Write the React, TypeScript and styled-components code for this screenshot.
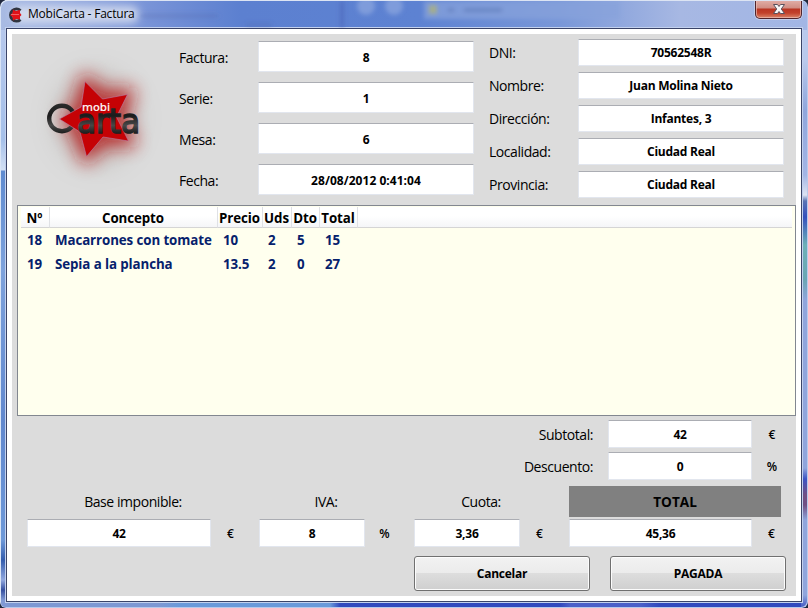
import React from 'react';
import styled, { createGlobalStyle } from 'styled-components';

const Global = createGlobalStyle`
  * { box-sizing: border-box; }
  body { margin: 0; overflow: hidden; background: #20283c; }
  button, table { font: inherit; }
`;

const Window = styled.main`
  width: 808px;
  height: 608px;
  padding: 0 6px 6px;
  border-radius: 7px 7px 6px 6px;
  box-shadow: inset 1px 1px 0 #d9e4f5, inset -1px -1px 0 #b9c9ea;
  font-family: 'Open Sans', 'Noto Sans', sans-serif;
  font-size: 14px;
  color: #000;
  background:
    linear-gradient(#b9c9ec 0 30px, #8fa6dc 80px, #a3b5e5 145px, #dde3f2 165px, #5a74b4 171px, #3450bd 187px, #6db0b8 215px, #6ba6b4 250px, #8fa5dc 270px, #8fa5dc 438px, #3d54c4 449px, #705084 465px, #705084 475px, #8fa5dc 490px, #8fa5dc 565px, #3149be 580px) right 30px / 7px 578px no-repeat,
    linear-gradient(#b6c8ec, #a5c0ea 110px, #d3e0f4 140px, #5f8bd0 141px, #7ea2dc 240px, #6188ce 390px, #6d98d8 510px, #335cad 530px, #91a8df 550px, #354f9f 560px, #8099d4 570px) left 30px / 7px 578px no-repeat,
    linear-gradient(90deg, #7d98d3 0 160px, #6a9ada 180px 330px, #3149be 340px 560px, #4b60c9 570px 640px, #3149be 660px) left bottom / 808px 7px no-repeat,
    linear-gradient(90deg, #a9bbe3, #9aaee0 60px, #7893d7 150px, #5c80d0 240px, #5d82d2 420px, #7997d8 560px, #a7b8e3 680px, #a2b6e5);
`;

const TitleBar = styled.header`
  position: relative;
  display: flex;
  align-items: flex-start;
  height: 28px;
  padding: 6px 0 0 1px;
  border-top: 1px solid #dce4f3;
  margin: 0 -1px;
  overflow: hidden;
`;

const Reflection = styled.svg`
  position: absolute;
  inset: 0;
`;

const WindowTitle = styled.h1`
  position: relative;
  margin: -1px 0 0 5px;
  font-size: 12px;
  line-height: 16px;
  font-weight: 400;
  letter-spacing: -0.2px;
  white-space: nowrap;
`;

const AppIcon = styled.svg`
  position: relative;
  margin-left: 1px;
`;

const CloseButton = styled.button`
  position: relative;
  width: 47px;
  height: 19px;
  margin: -7px 1px 0 auto;
  padding: 2px 0 0;
  display: flex;
  justify-content: center;
  border: 1px solid #50242c;
  border-top: 0;
  border-radius: 0 0 5px 5px;
  background: linear-gradient(#e2b0a9, #d08d83 8px, #b93523 9px, #c2412b 13px, #da8569);
  box-shadow: inset 0 0 0 1px #ecc0b8aa, 0 0 0 1px #d5dcef99;
`;

const Client = styled.div`
  height: 574px;
  padding: 5px;
  border: 1px solid #3a4468;
  background: #fff;
  box-shadow: 0 0 0 1px #c3d1ee;
`;

const Form = styled.div`
  display: flex;
  flex-direction: column;
  height: 562px;
  background: #dcdcdc;
`;

const Top = styled.section`
  display: flex;
  height: 171px;
`;

const LogoBox = styled.div`
  width: 167px;
`;

const FieldColumn = styled.div<{ $label: number; $pitch: number; $top: number; $left?: number }>`
  display: grid;
  grid-template-columns: ${p => p.$label}px auto;
  grid-auto-rows: ${p => p.$pitch}px;
  padding-top: ${p => p.$top}px;
  margin-left: ${p => p.$left ?? 0}px;
  align-content: start;
`;

const Label = styled.label<{ $h?: number }>`
  line-height: ${p => p.$h ?? 30}px;
  letter-spacing: -0.44px;
  white-space: nowrap;
`;

const Field = styled.output<{ $w: number; $h?: number; $spacing?: number }>`
  display: flex;
  align-items: center;
  justify-content: center;
  width: ${p => p.$w}px;
  height: ${p => p.$h ?? 28}px;
  border: 1px solid #e2e6ee;
  border-top-color: #abadb3;
  border-radius: 1px;
  background: #fff;
  font-size: 12px;
  font-weight: 700;
  letter-spacing: ${p => p.$spacing ?? -0.24}px;
  white-space: nowrap;
`;

const TallField = styled(Field)`
  padding-top: 2px;
`;

const ListView = styled.section`
  height: 211px;
  margin: 0 0 0 5px;
  padding: 1px 3px;
  border: 1px solid #828790;
  background: #ffffee;
`;

const Table = styled.table`
  width: 100%;
  table-layout: fixed;
  border-collapse: separate;
  border-spacing: 0;
  font-size: 13.33px;
  font-weight: 700;
`;

const HeadCell = styled.th<{ $w?: number }>`
  width: ${p => (p.$w ? `${p.$w}px` : 'auto')};
  height: 21px;
  padding: 1px 1px 0 0;
  border-right: ${p => (p.$w ? '1px solid #dfe1e5' : '0')};
  border-bottom: 1px solid #d5d5d5;
  background: linear-gradient(#fff 45%, #f5f6f8);
  line-height: 18px;
  letter-spacing: -0.1px;
  white-space: nowrap;
`;

const Cell = styled.td`
  height: 24px;
  padding: 0 0 1px 5px;
  line-height: 20px;
  letter-spacing: -0.1px;
  color: #06216c;
  white-space: nowrap;

  &:first-child {
    padding-left: 6px;
  }
`;

const Summary = styled.section`
  padding-top: 4px;
`;

const SummaryRow = styled.div`
  display: grid;
  grid-template-columns: 581px 15px 144px 40px;
  height: 32px;
`;

const RightLabel = styled(Label)`
  text-align: right;
`;

const Unit = styled.span`
  display: flex;
  align-items: center;
  justify-content: center;
  height: 28px;
  font-size: 12px;
  font-weight: 600;
`;

const Totals = styled.section`
  display: grid;
  grid-template-columns: 184px 39px 9px 106px 39px 10px 106px 39px 10px 183px 39px;
  grid-template-rows: 33px 28px;
  margin: 2px 0 0 15px;
`;

const CenterLabel = styled(Label)<{ $col: number; $shift?: number }>`
  grid-column: ${p => p.$col};
  grid-row: 1;
  text-align: center;
  padding-left: ${p => p.$shift ?? 0}px;
`;

const TotalBanner = styled.strong`
  grid-column: 10 / 12;
  grid-row: 1;
  width: 212px;
  height: 31px;
  background: #808080;
  text-align: center;
  line-height: 32px;
  font-size: 13.6px;
`;

const Amount = styled(Field)<{ $col: number }>`
  grid-column: ${p => p.$col};
  grid-row: 2;
`;

const AmountUnit = styled(Unit)<{ $col: number }>`
  grid-column: ${p => p.$col};
  grid-row: 2;
`;

const Actions = styled.footer`
  display: flex;
  gap: 20px;
  margin: 9px 0 0 402px;
`;

const ActionButton = styled.button`
  width: 176px;
  height: 35px;
  padding: 0 0 1px;
  border: 1px solid #707070;
  border-radius: 3px;
  background: linear-gradient(#f2f2f2, #ebebeb 49%, #dddddd 50%, #cfcfcf);
  box-shadow: inset 0 0 0 1px #fcfcfc;
  font-size: 12px;
  font-weight: 700;
  letter-spacing: -0.25px;
`;

const invoiceFields: { label: string; value: string; spacing?: number }[] = [
  { label: 'Factura:', value: '8' },
  { label: 'Serie:', value: '1' },
  { label: 'Mesa:', value: '6' },
  { label: 'Fecha:', value: '28/08/2012 0:41:04', spacing: 0.04 },
];

const customerFields = [
  ['DNI:', '70562548R'],
  ['Nombre:', 'Juan Molina Nieto'],
  ['Dirección:', 'Infantes, 3'],
  ['Localidad:', 'Ciudad Real'],
  ['Provincia:', 'Ciudad Real'],
];

const columns: [string, number?][] = [
  ['Nº', 29], ['Concepto', 168], ['Precio', 45], ['Uds', 29], ['Dto', 28], ['Total', 38], ['', undefined],
];

const lines = [
  ['18', 'Macarrones con tomate', '10', '2', '5', '15', ''],
  ['19', 'Sepia a la plancha', '13.5', '2', '0', '27', ''],
];

const amounts = [
  { label: 'Base imponible:', value: '42', unit: '€', w: 184, col: 1, shift: 28 },
  { label: 'IVA:', value: '8', unit: '%', w: 106, col: 4, shift: 28 },
  { label: 'Cuota:', value: '3,36', unit: '€', w: 106, col: 7, shift: 28 },
];

const Logo = () => (
  <svg width="167" height="171" viewBox="12 34 167 171">
    <defs>
      <filter id="glow" x="-80%" y="-80%" width="260%" height="260%"><feGaussianBlur stdDeviation="9" /></filter>
      <filter id="shade" x="-80%" y="-80%" width="260%" height="260%"><feGaussianBlur stdDeviation="14" /></filter>
      <linearGradient id="ink" gradientUnits="userSpaceOnUse" x1="0" y1="103" x2="0" y2="135">
        <stop offset="0" stopColor="#2c2c2c" />
        <stop offset="0.4" stopColor="#1c1c1c" />
        <stop offset="0.7" stopColor="#484848" />
        <stop offset="1" stopColor="#151515" />
      </linearGradient>
    </defs>
    <ellipse cx="96" cy="119" rx="38" ry="44" fill="#8d8078" opacity="0.4" filter="url(#shade)" />
    <path d="M85 78 102.500 94 131 92 121 117 132 143 103 142 86 160 76 134 66 119 77 107Z" fill="#b81818" stroke="#b81818" strokeWidth="8" strokeLinejoin="round" opacity="0.8" filter="url(#glow)" />
    <circle cx="62" cy="118.500" r="12.800" fill="none" stroke="url(#ink)" strokeWidth="4.400" />
    <path d="M85 81.5 102.5 99 127.5 94.5 116.5 117 128.5 141 103 137 86.5 156.5 80 132 59.5 119 81 107Z" fill="#c50205" stroke="#b981a8" strokeWidth="0.6" />
    <text x="77" y="133" fontFamily="DejaVu Sans" fontSize="34" fill="url(#ink)" stroke="url(#ink)" strokeWidth="1.700" textLength="63" lengthAdjust="spacingAndGlyphs">arta</text>
    <text x="82" y="110.5" fontFamily="DejaVu Sans" fontSize="11" fill="#fff" stroke="#fff" strokeWidth="0.2" textLength="28" lengthAdjust="spacingAndGlyphs">mobi</text>
  </svg>
);

export default function App() {
  return (
    <>
      <Global />
      <Window>
        <TitleBar>
          <Reflection width="798" height="28" viewBox="5 0 798 28">
            <defs>
              <filter id="soft" x="-30%" y="-80%" width="160%" height="260%"><feGaussianBlur stdDeviation="4" /></filter>
              <filter id="fine"><feGaussianBlur stdDeviation="2.2" /></filter>
            </defs>
            <rect x="12" y="5" width="127" height="17" rx="8" fill="#e0e5f2" opacity=".8" filter="url(#soft)" />
            <g filter="url(#fine)">
              <path d="M140 15H218M246 24h26" stroke="#5269a8" strokeWidth="4" opacity=".3" />
              <path d="M342 0V27" stroke="#4055a8" strokeWidth="3" opacity=".5" />
              <circle cx="366" cy="5" r="9" fill="#91abe0" opacity=".65" />
              <circle cx="394" cy="5" r="9" fill="#91abe0" opacity=".65" />
              <path d="M424 0H620V18H424Z" fill="#87a2dc" opacity=".7" />
              <path d="M429 4h8v9h-8z" fill="#a3ad8b" />
              <path d="M448 9h6M464 9h38" stroke="#5270af" strokeWidth="4" opacity=".5" />
            </g>
          </Reflection>
          <AppIcon width="16" height="16" viewBox="0 0 16 16">
            <path d="M13.500 3.500A6 6 0 1 0 13.500 12.500" fill="none" stroke="#303540" strokeWidth="3" />
            <path d="M6 2.500l2.500 1.500 4.500-1v3l1.500 2-1.500 1.500v3l-4-.5-3 1.500-.5-3.500L3 8l2.500-2z" fill="#e11219" />
            <path d="M4.500 7.500h7" stroke="#ffb4b4" strokeDasharray="1 1" />
          </AppIcon>
          <WindowTitle>MobiCarta - Factura</WindowTitle>
          <CloseButton aria-label="Cerrar">
            <svg width="14" height="14" viewBox="0 0 14 14">
              <path d="M1.500 2.500h4L7 4.500 8.500 2.500h4L9.300 7l3.200 4.500h-4L7 9.500 5.500 11.500h-4L4.700 7Z" fill="#f8f8f8" stroke="#59505c" strokeWidth="1" />
            </svg>
          </CloseButton>
        </TitleBar>
        <Client>
          <Form>
            <Top>
              <LogoBox><Logo /></LogoBox>
              <FieldColumn $label={79} $pitch={41} $top={7}>
                {invoiceFields.map(f => (
                  <React.Fragment key={f.label}>
                    <Label $h={33}>{f.label}</Label>
                    <TallField $w={216} $h={31} $spacing={f.spacing}>{f.value}</TallField>
                  </React.Fragment>
                ))}
              </FieldColumn>
              <FieldColumn $label={89} $pitch={33} $top={5} $left={15}>
                {customerFields.map(([label, value]) => (
                  <React.Fragment key={label}>
                    <Label $h={27}>{label}</Label>
                    <Field $w={206} $h={27}>{value}</Field>
                  </React.Fragment>
                ))}
              </FieldColumn>
            </Top>
            <ListView>
              <Table>
                <thead>
                  <tr>{columns.map(([name, w], i) => <HeadCell key={i} $w={w}>{name}</HeadCell>)}</tr>
                </thead>
                <tbody>
                  {lines.map(line => (
                    <tr key={line[0]}>{line.map((text, i) => <Cell key={i}>{text}</Cell>)}</tr>
                  ))}
                </tbody>
              </Table>
            </ListView>
            <Summary>
              <SummaryRow>
                <RightLabel>Subtotal:</RightLabel><span /><Field $w={144}>42</Field><Unit>€</Unit>
              </SummaryRow>
              <SummaryRow>
                <RightLabel>Descuento:</RightLabel><span /><Field $w={144}>0</Field><Unit>%</Unit>
              </SummaryRow>
            </Summary>
            <Totals>
              {amounts.map(a => (
                <React.Fragment key={a.label}>
                  <CenterLabel $col={a.col} $shift={a.shift} $h={32}>{a.label}</CenterLabel>
                  <Amount $col={a.col} $w={a.w}>{a.value}</Amount>
                  <AmountUnit $col={a.col + 1}>{a.unit}</AmountUnit>
                </React.Fragment>
              ))}
              <TotalBanner>TOTAL</TotalBanner>
              <Amount $col={10} $w={183}>45,36</Amount>
              <AmountUnit $col={11}>€</AmountUnit>
            </Totals>
            <Actions>
              <ActionButton>Cancelar</ActionButton>
              <ActionButton>PAGADA</ActionButton>
            </Actions>
          </Form>
        </Client>
      </Window>
    </>
  );
}
